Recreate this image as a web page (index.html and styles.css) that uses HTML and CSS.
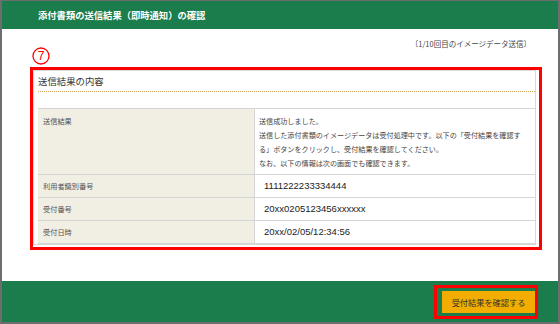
FILE: index.html
```html
<!DOCTYPE html>
<html lang="ja">
<head>
    <meta charset="UTF-8">
    <title>添付書類の送信結果（即時通知）の確認</title>
    <link rel="stylesheet" href="styles.css">
</head>
<body>
    <div class="frame">
        <header class="page-header">
            <h1>添付書類の送信結果（即時通知）の確認</h1>
        </header>

        <main class="content">
            <div class="top-row">
                <svg class="step-mark" width="18" height="18" viewBox="0 0 18 18">
                    <circle cx="9" cy="9" r="8" fill="none" stroke="#f00" stroke-width="1.3"/>
                    <text x="9.1" y="13.2" text-anchor="middle" font-size="12" font-family="Liberation Sans, sans-serif" fill="#f00">7</text>
                </svg>
                <p class="send-count">〔1/10回目のイメージデータ送信〕</p>
            </div>

            <div class="highlight">
                <section class="panel">
                    <h2 class="panel-title">送信結果の内容</h2>
                    <table class="result-table">
                        <tr class="msg-row">
                            <th>送信結果</th>
                            <td>
                                送信成功しました。<br>
                                送信した添付書類のイメージデータは受付処理中です。以下の「受付結果を確認す<br>
                                る」ボタンをクリックし、受付結果を確認してください。<br>
                                なお、以下の情報は次の画面でも確認できます。
                            </td>
                        </tr>
                        <tr>
                            <th>利用者識別番号</th>
                            <td class="num">1111222233334444</td>
                        </tr>
                        <tr>
                            <th>受付番号</th>
                            <td class="num">20xx0205123456xxxxxx</td>
                        </tr>
                        <tr>
                            <th>受付日時</th>
                            <td class="num">20xx/02/05/12:34:56</td>
                        </tr>
                    </table>
                </section>
            </div>
        </main>

        <footer class="page-footer">
            <div class="btn-highlight">
                <button class="confirm-btn" type="button">受付結果を確認する</button>
            </div>
        </footer>
    </div>
</body>
</html>
```

FILE: styles.css
```css
body {
    margin: 0;
    padding: 0;
    font-family: 'Noto Sans CJK JP', 'Noto Sans', sans-serif;
    background-color: #fff;
    color: #333;
}
.frame {
    width: 560px;
    height: 324px;
    box-sizing: border-box;
    border: 2px solid #6d6d6d;
    border-top-width: 1px;
    display: flex;
    flex-direction: column;
    background-color: #fff;
}
.page-header {
    height: 28px;
    background-color: #1b7d4b;
    display: flex;
    align-items: center;
    padding-left: 36px;
}
.page-header h1 {
    margin: 0;
    font-size: 9.3px;
    font-weight: 700;
    color: #fff;
    line-height: 12px;
}
.content {
    height: 252px;
    box-sizing: border-box;
    padding: 10px 16px 0 28px;
}
.top-row {
    display: flex;
    justify-content: space-between;
    align-items: flex-start;
    height: 28px;
}
.step-mark {
    display: block;
    margin: 8px 0 0 2px;
}
.send-count {
    margin: 0 11px 0 0;
    font-size: 7.5px;
    line-height: 10px;
    color: #444;
}
.highlight {
    border: 3px solid #f00;
    padding: 0 3px 2px 0;
}
.panel {
    border: 1px solid #d8d8d8;
    padding: 0 0 0 4px;
    background-color: #fff;
}
.panel-title {
    margin: 0;
    padding: 3px 0 3px;
    font-size: 9.4px;
    font-weight: 400;
    line-height: 14px;
    color: #333;
    border-bottom: 1px dotted #cfa557;
}
.result-table {
    width: 100%;
    margin-top: 16px;
    border-collapse: collapse;
}
.result-table th,
.result-table td {
    border-top: 1px solid #d5d5d5;
    border-bottom: 1px solid #d5d5d5;
    height: 22px;
    padding: 0 0 0 4px;
    vertical-align: middle;
    text-align: left;
    font-weight: 400;
}
.result-table th {
    width: 211px;
    padding-left: 5px;
    background-color: #f1eee3;
    border-right: 1px solid #d5d5d5;
    font-size: 7.2px;
    color: #555;
}
.result-table td {
    font-size: 7.1px;
    line-height: 14px;
    color: #444;
}
.msg-row th,
.msg-row td {
    vertical-align: top;
    padding-top: 5px;
    padding-bottom: 4px;
}
.msg-row th {
    line-height: 14px;
}
.result-table td.num {
    padding-left: 9px;
    font-family: 'Liberation Sans', sans-serif;
    font-size: 9.5px;
    color: #222;
}
.page-footer {
    flex: 1;
    background-color: #1b7d4b;
    display: flex;
    justify-content: flex-end;
    align-items: flex-start;
    padding: 4px 20px 0 0;
}
.btn-highlight {
    border: 3px solid #f00;
    padding: 3px 0 3px 5px;
}
.confirm-btn {
    display: block;
    width: 93px;
    height: 22px;
    padding: 0;
    border: none;
    background-color: #f2ad00;
    color: #333;
    font-family: 'Noto Sans CJK JP', sans-serif;
    font-size: 8.2px;
    cursor: pointer;
}
```
